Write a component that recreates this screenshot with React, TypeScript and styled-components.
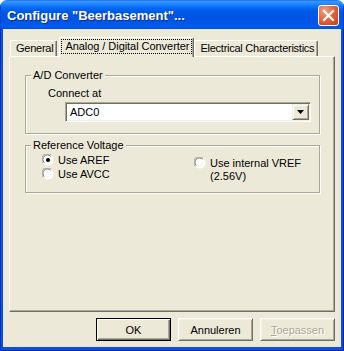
import React from "react";
import styled, { createGlobalStyle } from "styled-components";

const Global = createGlobalStyle`
  html, body { margin: 0; padding: 0; background: #ffffff; }
  body { font-family: "Liberation Sans", Arial, sans-serif; font-size: 11px; color: #000; }
  * { box-sizing: border-box; }
`;

const Window = styled.div`
  width: 344px;
  height: 351px;
  display: flex;
  flex-direction: column;
  border-radius: 7px 7px 0 0;
  overflow: hidden;
`;

const TitleBar = styled.div`
  height: 29px;
  flex: none;
  display: flex;
  align-items: flex-start;
  justify-content: space-between;
  padding: 0 5px 0 7px;
  background: linear-gradient(
    to bottom,
    #0a5ff0 0px,
    #3d95ff 1px,
    #2b8dff 3px,
    #167fff 5px,
    #0670fa 7px,
    #0264ef 9px,
    #0058e6 12px,
    #0054e3 18px,
    #0056e9 23px,
    #005cf2 26px,
    #0058ea 28px,
    #0044cf 29px
  );
  box-shadow: inset 1px 0 #0a46d6, inset -1px 0 #0a3ccc;
`;

const TitleText = styled.span`
  color: #ffffff;
  font: bold 13px "Liberation Sans", Arial, sans-serif;
  line-height: 29px;
  padding-top: 1px;
  text-shadow: 1px 1px #0a2a9a;
  white-space: nowrap;
`;

const CloseButton = styled.div`
  width: 21px;
  height: 21px;
  margin-top: 5px;
  border: 1px solid #ffffff;
  border-radius: 3px;
  background: radial-gradient(circle at 30% 25%, #f2a78a 0%, #e8704a 35%, #d8512a 70%, #c8401a 100%);
  display: flex;
  align-items: center;
  justify-content: center;
`;

const Frame = styled.div`
  flex: 1;
  display: flex;
  flex-direction: column;
  padding: 0 3px 4px 3px;
  background: #0c4fde;
  box-shadow: inset 1px 0 #0733c4, inset -1px 0 #0029a8, inset 0 -1px #0029a8;
`;

const Client = styled.div`
  flex: 1;
  display: flex;
  flex-direction: column;
  background: #ece9d8;
  padding: 8px 6px 6px 6px;
`;

const TabStrip = styled.div`
  display: flex;
  align-items: flex-end;
  height: 20px;
  margin-bottom: -1px;
  padding-left: 1px;
`;

const Tab = styled.div<{ $active?: boolean; $gap?: number }>`
  position: relative;
  z-index: ${(p) => (p.$active ? 1 : 0)};
  height: ${(p) => (p.$active ? 20 : 16)}px;
  margin-bottom: ${(p) => (p.$active ? 0 : 1)}px;
  margin-left: ${(p) => p.$gap ?? 0}px;
  padding: ${(p) => (p.$active ? "1px 1px 0 1px" : "0 3px 0 5px")};
  letter-spacing: ${(p) => (p.$active ? "-0.05px" : "-0.25px")};
  background: #ece9d8;
  border-top: 1px solid #ffffff;
  border-left: 1px solid #ffffff;
  border-right: 1px solid #716f64;
  border-radius: 2px 2px 0 0;
  box-shadow: inset -1px 0 #aca899;
  line-height: 14px;
  white-space: nowrap;
`;

const FocusLabel = styled.span`
  display: block;
  padding: 0 2px 0 3px;
  border: 1px dotted #000;
  line-height: 13px;
`;

const Panel = styled.div`
  position: relative;
  flex: 1;
  display: flex;
  flex-direction: column;
  gap: 5px;
  padding: 12px 14px 0 15px;
  background: #ece9d8;
  border: 1px solid;
  border-color: #ffffff #716f64 #716f64 #ffffff;
  box-shadow: inset -1px -1px #aca899;
`;

const Group = styled.fieldset`
  margin: 0;
  padding: 0;
  min-width: 0;
  border: 1px solid #aca899;
  box-shadow: inset 1px 1px #ffffff, 1px 1px #ffffff;
`;

const Legend = styled.legend`
  margin-left: 5px;
  padding: 0 2px;
  line-height: 13px;
  background: #ece9d8;
`;

const GroupBody = styled.div<{ $pad: string }>`
  padding: ${(p) => p.$pad};
`;

const FieldLabel = styled.div`
  line-height: 13px;
`;

const Combo = styled.div`
  display: flex;
  align-items: center;
  height: 20px;
  margin: 2px 0 0 17px;
  background: #ffffff;
  border: 1px solid;
  border-color: #aca899 #ffffff #ffffff #aca899;
  box-shadow: inset 1px 1px #716f64, inset -1px -1px #f1efe2;
  padding: 1px 1px 1px 4px;
`;

const ComboText = styled.span`
  flex: 1;
  line-height: 14px;
`;

const DropButton = styled.div`
  width: 17px;
  height: 16px;
  display: flex;
  align-items: center;
  justify-content: center;
  background: #ece9d8;
  border: 1px solid;
  border-color: #f1efe2 #716f64 #716f64 #f1efe2;
  box-shadow: inset 1px 1px #ffffff, inset -1px -1px #aca899;
`;

const RadioGrid = styled.div`
  display: grid;
  grid-template-columns: 152px 1fr;
`;

const RadioColumn = styled.div<{ $offset?: number }>`
  display: flex;
  flex-direction: column;
  margin-top: ${(p) => p.$offset ?? 0}px;
`;

const RadioRow = styled.div`
  display: flex;
  align-items: flex-start;
  gap: 4px;
  line-height: 14px;
`;

const RadioMark = styled.svg`
  flex: none;
  margin-top: 1px;
`;

const RadioLabel = styled.span`
  line-height: 13px;
  padding-top: 1px;
`;

const ButtonRow = styled.div`
  display: flex;
  justify-content: flex-end;
  gap: 7px;
  margin-top: 6px;
`;

const Button = styled.div<{ $default?: boolean; $disabled?: boolean }>`
  width: 75px;
  height: 23px;
  display: flex;
  align-items: center;
  justify-content: center;
  background: #ece9d8;
  color: ${(p) => (p.$disabled ? "#aca899" : "#000000")};
  text-shadow: ${(p) => (p.$disabled ? "1px 1px #ffffff" : "none")};
  border: 1px solid;
  border-color: ${(p) => (p.$default ? "#000000" : "#ffffff #716f64 #716f64 #ffffff")};
  box-shadow: ${(p) =>
    p.$default
      ? "inset 1px 1px #ffffff, inset -1px -1px #716f64, inset -2px -2px #aca899"
      : "inset 1px 1px #f1efe2, inset -1px -1px #aca899"};
  line-height: 14px;
`;

const Radio = ({ checked }: { checked?: boolean }) => (
  <RadioMark width="12" height="12" viewBox="0 0 12 12">
    <circle cx="6" cy="6" r="5.5" fill="#ffffff" />
    <path d="M1.2 9.2 A5.5 5.5 0 0 1 9.2 1.2" fill="none" stroke="#aca899" strokeWidth="1" />
    <path d="M2.2 8.6 A4.5 4.5 0 0 1 8.6 2.2" fill="none" stroke="#716f64" strokeWidth="1" />
    <path d="M9.8 2.8 A5.5 5.5 0 0 1 2.8 9.8" fill="none" stroke="#ffffff" strokeWidth="1" />
    <path d="M9 3.6 A4.5 4.5 0 0 1 3.6 9" fill="none" stroke="#f1efe2" strokeWidth="1" />
    {checked && <circle cx="6" cy="6" r="2" fill="#000000" />}
  </RadioMark>
);

export default function App() {
  return (
    <>
      <Global />
      <Window>
        <TitleBar>
          <TitleText>Configure "Beerbasement"...</TitleText>
          <CloseButton>
            <svg width="19" height="19" viewBox="0 0 19 19">
              <path d="M5 5 L14 14 M14 5 L5 14" stroke="#ffffff" strokeWidth="2.2" strokeLinecap="square" />
            </svg>
          </CloseButton>
        </TitleBar>
        <Frame>
          <Client>
            <TabStrip>
              <Tab>General</Tab>
              <Tab $active $gap={2}>
                <FocusLabel>Analog / Digital Converter</FocusLabel>
              </Tab>
              <Tab>Electrical Characteristics</Tab>
            </TabStrip>
            <Panel>
              <Group>
                <Legend>A/D Converter</Legend>
                <GroupBody $pad="5px 8px 11px 22px">
                  <FieldLabel>Connect at</FieldLabel>
                  <Combo>
                    <ComboText>ADC0</ComboText>
                    <DropButton>
                      <svg width="7" height="4" viewBox="0 0 7 4">
                        <path d="M0 0 H7 L3.5 4 Z" fill="#000000" />
                      </svg>
                    </DropButton>
                  </Combo>
                </GroupBody>
              </Group>
              <Group>
                <Legend>Reference Voltage</Legend>
                <GroupBody $pad="1px 8px 9px 16px">
                  <RadioGrid>
                    <RadioColumn>
                      <RadioRow>
                        <Radio checked />
                        <RadioLabel>Use AREF</RadioLabel>
                      </RadioRow>
                      <RadioRow>
                        <Radio />
                        <RadioLabel>Use AVCC</RadioLabel>
                      </RadioRow>
                    </RadioColumn>
                    <RadioColumn $offset={3}>
                      <RadioRow>
                        <Radio />
                        <RadioLabel>
                          Use internal VREF
                          <br />
                          (2.56V)
                        </RadioLabel>
                      </RadioRow>
                    </RadioColumn>
                  </RadioGrid>
                </GroupBody>
              </Group>
            </Panel>
            <ButtonRow>
              <Button $default>OK</Button>
              <Button>Annuleren</Button>
              <Button $disabled>
                <span>
                  <u>T</u>oepassen
                </span>
              </Button>
            </ButtonRow>
          </Client>
        </Frame>
      </Window>
    </>
  );
}
